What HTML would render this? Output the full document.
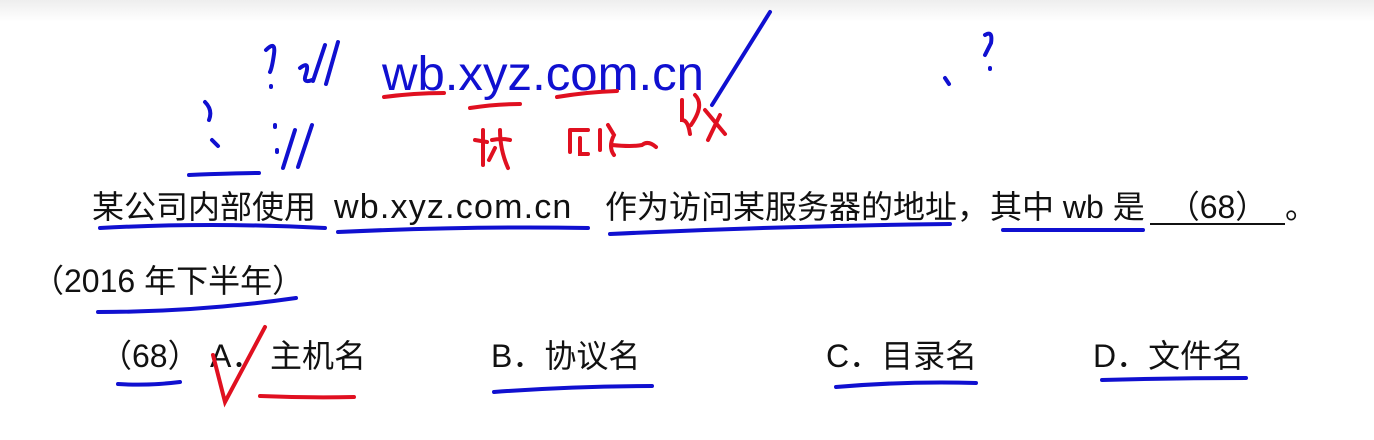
<!DOCTYPE html>
<html><head><meta charset="utf-8"><style>
body{margin:0;width:1374px;height:440px;background:#fff;overflow:hidden;position:relative;font-family:"Liberation Sans","Noto Sans CJK SC",sans-serif;color:#111}
.top{position:absolute;left:0;top:0;width:1374px;height:22px;background:linear-gradient(#eee,#fff)}
.t{position:absolute;font-size:32px;white-space:nowrap;line-height:1}
svg{position:absolute;left:0;top:0}
</style></head><body>
<div class="top"></div>
<div class="t" style="left:92px;top:191px">某公司内部使用</div>
<div class="t" style="left:334px;top:190px;font-size:34px;letter-spacing:1.2px">wb.xyz.com.cn</div>
<div class="t" style="left:605px;top:191px">作为访问某服务器的地址，</div>
<div class="t" style="left:990px;top:191px">其中 wb 是</div>
<div class="t" style="left:1150px;top:191px;width:135px;border-bottom:2px solid #111;text-align:center">（68）</div>
<div class="t" style="left:1285px;top:191px">。</div>
<div class="t" style="left:32px;top:265px">（2016 年下半年）</div>
<div class="t" style="left:100px;top:340px">（68）</div>
<div class="t" style="left:210px;top:340px">A．</div>
<div class="t" style="left:270px;top:340px">主机名</div>
<div class="t" style="left:491px;top:340px">B．协议名</div>
<div class="t" style="left:826px;top:340px">C．目录名</div>
<div class="t" style="left:1093px;top:340px">D．文件名</div>
<svg width="1374" height="440" fill="none" stroke-linecap="round" stroke-width="4">
<text x="382" y="90" fill="#1010d0" stroke="none" font-family="Liberation Sans" font-size="48" textLength="322" lengthAdjust="spacingAndGlyphs">wb.xyz.com.cn</text>
<g stroke="#1010d0">
<path d="M266 50q10-10 8 4t-4 18M271 86v1M300 68q10-8 6 6q-4 10 6 6M325 45l-12 36M338 42l-12 42M712 105L770 12M205 102q8 8 4 18M212 140l6 6M259 173q-20 0-70 2M275 125v2M277 150v2M295 130l-12 38M312 125l-14 42M945 78l4 6M985 35q8-5 6 8l-6 12M990 68v1"/>
<path d="M100 228q110-6 225 0M338 232q130-6 250-4M610 234q170-8 340-10M1003 230q70 0 140 0M98 312q100 0 198-14M118 384q30 2 62-2M494 392q80-6 158-6M836 387q70-6 140-4M1102 380q70-2 144-2"/>
</g>
<g stroke="#e01020">
<path d="M384 97q30-4 60-4M470 108q25-4 50-4M557 97q30-5 60-6M213 355l12 47l40-75M260 396q48 2 94 1"/>
<path d="M475 140l12 2M483 130v35M492 140q10-2 18 0M500 130q0 20 8 38M495 148l-6 12M570 130v22M570 130h18M580 138v16h8M600 130v20M608 125l6 10q-6 12 0 20M612 145q20 2 30 0q6-5 14 2M682 100v20q6 0 8 14M695 95q10 10 -4 30M705 110l20 24M720 115l-12 25"/>
</g>
</svg>
</body></html>
